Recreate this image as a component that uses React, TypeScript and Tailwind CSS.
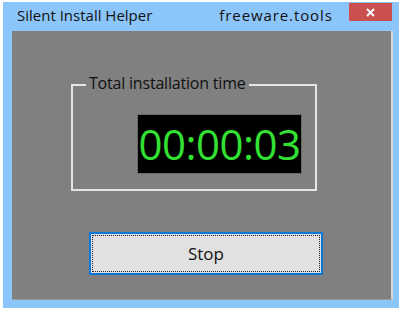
import React from "react";

export default function App() {
  const [elapsed] = React.useState("00:00:03");

  return (
    <div className="w-[400px] h-[310px] bg-white pt-[2px] pl-[3px]">
      <div className="w-[396px] h-[306px] bg-[#8cc5f9] flex flex-col">
        {/* Title bar */}
        <div className="h-[29px] flex items-start relative" style={{ fontFamily: '"Open Sans", "Noto Sans", sans-serif' }}>
          <span className="mt-[3px] ml-[14px] text-[15px] text-[#111] leading-[20px]">Silent Install Helper</span>
          <span className="mt-[3px] ml-[67px] text-[15px] text-[#111] leading-[20px] tracking-[0.9px]">freeware.tools</span>
          <button className="absolute right-[7px] top-[1px] w-[43px] h-[18px] bg-[#c9504f] flex items-center justify-center text-white">
            <svg width="9" height="9" viewBox="0 0 9 9">
              <path d="M1 1 L8 8 M8 1 L1 8" stroke="white" strokeWidth="2" />
            </svg>
          </button>
        </div>

        {/* Client area */}
        <div className="ml-[9px] w-[381px] h-[269px] bg-[#808080] border-r-2 border-b border-r-[#d8d8d8] border-b-[#9a9a9a] flex flex-col" style={{ fontFamily: '"Open Sans", "Noto Sans", sans-serif' }}>
          {/* Group box */}
          <div className="relative ml-[59px] mt-[53px] w-[246px] h-[107px] border-2 border-[#e4e4e4]">
            <span className="absolute -top-[13px] left-[13px] px-[3px] bg-[#808080] text-[16px] leading-[21px] tracking-[-0.2px] text-[#111]">
              Total installation time
            </span>
            <div className="ml-[64px] mt-[28px] w-[165px] h-[60px] bg-black border border-[#6a6a6a] flex items-center justify-center">
              <span className="text-[#33e133] text-[42px] leading-none tracking-[-0.5px]" style={{ fontFamily: '"Open Sans", sans-serif' }}>
                {elapsed}
              </span>
            </div>
          </div>

          {/* Stop button */}
          <button className="ml-[77px] mt-[41px] w-[234px] h-[43px] border-2 border-[#0a78d6] bg-[#e1e1e1] p-[1px]">
            <div className="w-full h-full border border-dotted border-[#222] flex items-center justify-center text-[17px] text-[#111]">
              Stop
            </div>
          </button>
        </div>
      </div>
    </div>
  );
}
